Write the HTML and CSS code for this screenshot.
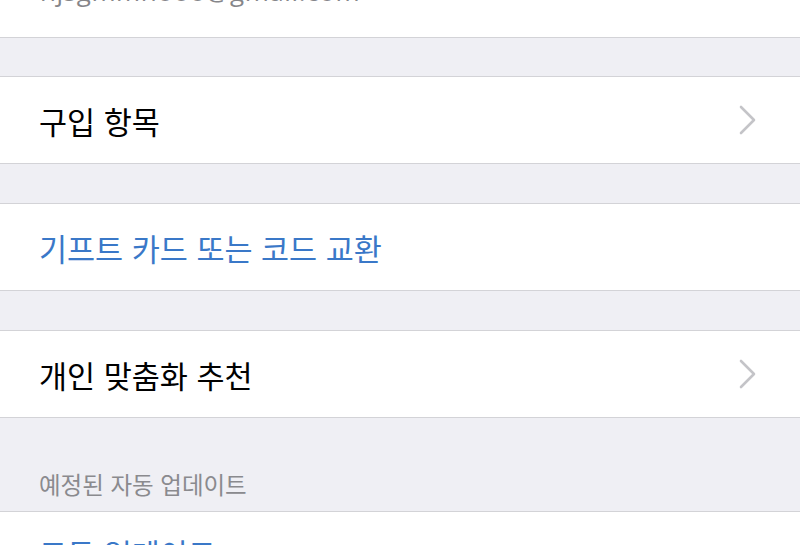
FILE: index.html
```html
<!DOCTYPE html>
<html lang="ko">
<head>
<meta charset="utf-8">
<link rel="stylesheet" href="styles.css">
</head>
<body>
<div class="screen">
  <div class="account"><span class="email">hjsgmmnooo@gmail.com</span></div>
  <div class="gap"></div>
  <div class="row">
    <span class="label">구입 항목</span>
    <svg class="chev" width="20" height="30" viewBox="0 0 20 30"><path d="M3 2 L16 15 L3 28" fill="none" stroke="#c4c4c8" stroke-width="2.6" stroke-linecap="round" stroke-linejoin="round"/></svg>
  </div>
  <div class="gap"></div>
  <div class="row">
    <span class="label link">기프트 카드 또는 코드 교환</span>
  </div>
  <div class="gap"></div>
  <div class="row">
    <span class="label">개인 맞춤화 추천</span>
    <svg class="chev" width="20" height="30" viewBox="0 0 20 30"><path d="M3 2 L16 15 L3 28" fill="none" stroke="#c4c4c8" stroke-width="2.6" stroke-linecap="round" stroke-linejoin="round"/></svg>
  </div>
  <div class="header"><span>예정된 자동 업데이트</span></div>
  <div class="row last">
    <span class="label link">모두 업데이트</span>
  </div>
</div>
</body>
</html>
```
FILE: styles.css
```css
html, body {
  margin: 0;
  padding: 0;
  background: #efeff4;
  overflow: hidden;
}
.screen {
  width: 800px;
  height: 545px;
  overflow: hidden;
  font-family: "Noto Sans CJK KR", "Noto Sans", sans-serif;
  display: flex;
  flex-direction: column;
}
.account {
  height: 37px;
  background: #fff;
  border-bottom: 1px solid #d3d3d7;
  overflow: hidden;
  padding-left: 40px;
  flex: none;
}
.email {
  display: block;
  font-family: "Open Sans", "Noto Sans", sans-serif;
  font-size: 26px;
  line-height: 30px;
  margin-top: -24px;
  color: #86868a;
  letter-spacing: 0.6px;
}
.gap {
  height: 38px;
  flex: none;
}
.gap + .row + .gap { height: 39px; }
.row {
  height: 86px;
  background: #fff;
  border-top: 1px solid #d3d3d7;
  border-bottom: 1px solid #d3d3d7;
  display: flex;
  align-items: center;
  justify-content: space-between;
  padding: 0 42px 0 39px;
  flex: none;
}
.label {
  font-size: 30.5px;
  line-height: 40px;
  color: #000;
  padding-top: 2px;
}
.link { color: #3a78c8; }
.chev { display: block; }
.header {
  height: 93px;
  display: flex;
  align-items: flex-end;
  padding: 0 0 12px 39px;
  box-sizing: border-box;
  flex: none;
}
.row + .header { margin-top: -1px; height: 94px; }
.header span {
  font-size: 23.5px;
  line-height: 30px;
  color: #8a8a8e;
}
.last {
  align-items: flex-start;
  padding-top: 19px;
  box-sizing: border-box;
}
```
